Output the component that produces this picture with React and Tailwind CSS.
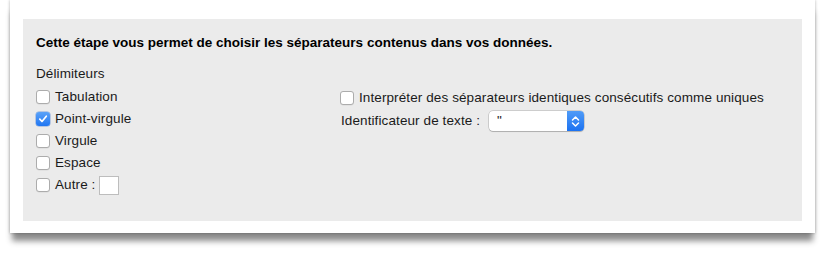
import React from 'react';

function Box({ checked }) {
  if (checked) {
    return (
      <span className="flex h-[14px] w-[14px] shrink-0 items-center justify-center rounded-[3px] bg-gradient-to-b from-[#5aa2f8] to-[#1f76f2] shadow-[0_0_0_0.5px_rgba(20,90,200,0.5)]">
        <svg width="10" height="10" viewBox="0 0 10 10">
          <path d="M1.8 5.2 L4 7.5 L8.3 2.2" fill="none" stroke="white" strokeWidth="1.7" strokeLinecap="round" strokeLinejoin="round" />
        </svg>
      </span>
    );
  }
  return (
    <span className="block h-[14px] w-[14px] shrink-0 rounded-[3px] border border-[#acacac] bg-white shadow-[0_0.5px_0.5px_rgba(0,0,0,0.08)]" />
  );
}

function Row({ label, checked, children }) {
  return (
    <div className="flex h-[22px] items-center gap-[5px]">
      <Box checked={checked} />
      <span>{label}</span>
      {children}
    </div>
  );
}

export default function App() {
  const delims = [
    ['Tabulation', false],
    ['Point-virgule', true],
    ['Virgule', false],
    ['Espace', false],
  ];

  return (
    <div
      className="h-[262px] w-[827px] overflow-hidden bg-white text-[13.5px] leading-4 tracking-[0.1px] text-[#1a1a1a]"
      style={{ fontFamily: '"Liberation Sans", Arial, sans-serif' }}
    >
      <div className="ml-[10px] h-[233px] w-[805px] bg-white px-[13px] pt-[19px] shadow-[0_10px_6px_-2px_rgba(0,0,0,0.45),0_0_3px_rgba(0,0,0,0.3)]">
        <div className="h-[202px] bg-[#ebebeb] pl-[13px] pt-4">
          <div className="font-bold tracking-normal text-black">
            Cette étape vous permet de choisir les séparateurs contenus dans vos données.
          </div>
          <div className="mt-[15px]">Délimiteurs</div>
          <div className="mt-1 flex">
            <div className="w-[304px]">
              {delims.map(([l, c]) => (
                <Row key={l} label={l} checked={c} />
              ))}
              <Row label="Autre :" checked={false}>
                <span className="-ml-px block h-[19px] w-[20px] border border-[#bdbdbd] bg-white" />
              </Row>
            </div>
            <div>
              <div className="flex h-6 items-center gap-[5px]">
                <Box checked={false} />
                <span>Interpréter des séparateurs identiques consécutifs comme uniques</span>
              </div>
              <div className="mt-px flex h-5 items-center">
                <span className="w-[149px] pl-px">Identificateur de texte :</span>
                <div className="flex h-5 w-[95px] rounded-[4px] bg-white shadow-[0_0_0_0.5px_rgba(0,0,0,0.25),0_1px_1px_rgba(0,0,0,0.15)]">
                  <span className="flex-1 pl-[8px] leading-5">"</span>
                  <span className="flex w-[17px] items-center justify-center rounded-r-[4px] bg-gradient-to-b from-[#4f9bf7] to-[#1b72f1]">
                    <svg width="9" height="13" viewBox="0 0 9 13">
                      <path d="M1.5 5 L4.5 2 L7.5 5 M1.5 8 L4.5 11 L7.5 8" fill="none" stroke="white" strokeWidth="1.5" strokeLinecap="round" strokeLinejoin="round" />
                    </svg>
                  </span>
                </div>
              </div>
            </div>
          </div>
        </div>
      </div>
    </div>
  );
}
